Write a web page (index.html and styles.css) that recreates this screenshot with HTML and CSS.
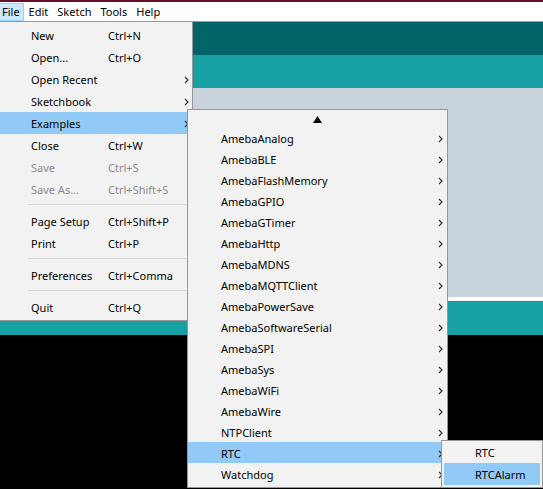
FILE: index.html
```html
<!DOCTYPE html>
<html>
<head>
<meta charset="utf-8">
<link rel="stylesheet" href="styles.css">
</head>
<body>
<div class="app">
  <div class="titlebar"></div>
  <div class="menubar">
    <span class="mb-item active">File</span>
    <span class="mb-item">Edit</span>
    <span class="mb-item">Sketch</span>
    <span class="mb-item">Tools</span>
    <span class="mb-item">Help</span>
  </div>
  <div class="toolbar"></div>
  <div class="tabs"></div>
  <div class="editor"></div>
  <div class="divider"></div>
  <div class="status"></div>
  <div class="console"></div>
</div>

<div class="menu file-menu">
  <div class="row"><span class="label">New</span><span class="key">Ctrl+N</span></div>
  <div class="row"><span class="label">Open...</span><span class="key">Ctrl+O</span></div>
  <div class="row"><span class="label">Open Recent</span><span class="key"></span><svg class="chev" width="5" height="8" viewBox="0 0 5 8"><path d="M1 1 L4 4 L1 7" fill="none" stroke="#333" stroke-width="1.2"/></svg></div>
  <div class="row"><span class="label">Sketchbook</span><span class="key"></span><svg class="chev" width="5" height="8" viewBox="0 0 5 8"><path d="M1 1 L4 4 L1 7" fill="none" stroke="#333" stroke-width="1.2"/></svg></div>
  <div class="row hl"><span class="label">Examples</span><span class="key"></span><svg class="chev" width="5" height="8" viewBox="0 0 5 8"><path d="M1 1 L4 4 L1 7" fill="none" stroke="#333" stroke-width="1.2"/></svg></div>
  <div class="row"><span class="label">Close</span><span class="key">Ctrl+W</span></div>
  <div class="row dis"><span class="label">Save</span><span class="key">Ctrl+S</span></div>
  <div class="row dis"><span class="label">Save As...</span><span class="key">Ctrl+Shift+S</span></div>
  <div class="sep"></div>
  <div class="row"><span class="label">Page Setup</span><span class="key">Ctrl+Shift+P</span></div>
  <div class="row"><span class="label">Print</span><span class="key">Ctrl+P</span></div>
  <div class="sep"></div>
  <div class="row"><span class="label">Preferences</span><span class="key">Ctrl+Comma</span></div>
  <div class="sep"></div>
  <div class="row"><span class="label">Quit</span><span class="key">Ctrl+Q</span></div>
</div>

<div class="menu examples-menu">
  <div class="scroll-up"><svg width="9" height="7" viewBox="0 0 9 7"><polygon points="4.5,0 9,7 0,7" fill="#000"/></svg></div>
  <div class="srow"><span class="slabel">AmebaAnalog</span><svg class="chev" width="5" height="8" viewBox="0 0 5 8"><path d="M1 1 L4 4 L1 7" fill="none" stroke="#333" stroke-width="1.2"/></svg></div>
  <div class="srow"><span class="slabel">AmebaBLE</span><svg class="chev" width="5" height="8" viewBox="0 0 5 8"><path d="M1 1 L4 4 L1 7" fill="none" stroke="#333" stroke-width="1.2"/></svg></div>
  <div class="srow"><span class="slabel">AmebaFlashMemory</span><svg class="chev" width="5" height="8" viewBox="0 0 5 8"><path d="M1 1 L4 4 L1 7" fill="none" stroke="#333" stroke-width="1.2"/></svg></div>
  <div class="srow"><span class="slabel">AmebaGPIO</span><svg class="chev" width="5" height="8" viewBox="0 0 5 8"><path d="M1 1 L4 4 L1 7" fill="none" stroke="#333" stroke-width="1.2"/></svg></div>
  <div class="srow"><span class="slabel">AmebaGTimer</span><svg class="chev" width="5" height="8" viewBox="0 0 5 8"><path d="M1 1 L4 4 L1 7" fill="none" stroke="#333" stroke-width="1.2"/></svg></div>
  <div class="srow"><span class="slabel">AmebaHttp</span><svg class="chev" width="5" height="8" viewBox="0 0 5 8"><path d="M1 1 L4 4 L1 7" fill="none" stroke="#333" stroke-width="1.2"/></svg></div>
  <div class="srow"><span class="slabel">AmebaMDNS</span><svg class="chev" width="5" height="8" viewBox="0 0 5 8"><path d="M1 1 L4 4 L1 7" fill="none" stroke="#333" stroke-width="1.2"/></svg></div>
  <div class="srow"><span class="slabel">AmebaMQTTClient</span><svg class="chev" width="5" height="8" viewBox="0 0 5 8"><path d="M1 1 L4 4 L1 7" fill="none" stroke="#333" stroke-width="1.2"/></svg></div>
  <div class="srow"><span class="slabel">AmebaPowerSave</span><svg class="chev" width="5" height="8" viewBox="0 0 5 8"><path d="M1 1 L4 4 L1 7" fill="none" stroke="#333" stroke-width="1.2"/></svg></div>
  <div class="srow"><span class="slabel">AmebaSoftwareSerial</span><svg class="chev" width="5" height="8" viewBox="0 0 5 8"><path d="M1 1 L4 4 L1 7" fill="none" stroke="#333" stroke-width="1.2"/></svg></div>
  <div class="srow"><span class="slabel">AmebaSPI</span><svg class="chev" width="5" height="8" viewBox="0 0 5 8"><path d="M1 1 L4 4 L1 7" fill="none" stroke="#333" stroke-width="1.2"/></svg></div>
  <div class="srow"><span class="slabel">AmebaSys</span><svg class="chev" width="5" height="8" viewBox="0 0 5 8"><path d="M1 1 L4 4 L1 7" fill="none" stroke="#333" stroke-width="1.2"/></svg></div>
  <div class="srow"><span class="slabel">AmebaWiFi</span><svg class="chev" width="5" height="8" viewBox="0 0 5 8"><path d="M1 1 L4 4 L1 7" fill="none" stroke="#333" stroke-width="1.2"/></svg></div>
  <div class="srow"><span class="slabel">AmebaWire</span><svg class="chev" width="5" height="8" viewBox="0 0 5 8"><path d="M1 1 L4 4 L1 7" fill="none" stroke="#333" stroke-width="1.2"/></svg></div>
  <div class="srow"><span class="slabel">NTPClient</span><svg class="chev" width="5" height="8" viewBox="0 0 5 8"><path d="M1 1 L4 4 L1 7" fill="none" stroke="#333" stroke-width="1.2"/></svg></div>
  <div class="srow hl"><span class="slabel">RTC</span><svg class="chev" width="5" height="8" viewBox="0 0 5 8"><path d="M1 1 L4 4 L1 7" fill="none" stroke="#333" stroke-width="1.2"/></svg></div>
  <div class="srow"><span class="slabel">Watchdog</span><svg class="chev" width="5" height="8" viewBox="0 0 5 8"><path d="M1 1 L4 4 L1 7" fill="none" stroke="#333" stroke-width="1.2"/></svg></div>
</div>

<div class="menu rtc-menu">
  <div class="rrow">RTC</div>
  <div class="rrow hl">RTCAlarm</div>
</div>
</body>
</html>
```

FILE: styles.css
```css
html, body {
  margin: 0;
  padding: 0;
  width: 543px;
  height: 489px;
  overflow: hidden;
  font-family: "Noto Sans", "Open Sans", sans-serif;
  font-size: 11px;
  color: #000;
}

.app {
  display: flex;
  flex-direction: column;
  height: 489px;
}

.titlebar { height: 2px; background: #64102a; }

.menubar {
  height: 19px;
  background: #fff;
  border-bottom: 1px solid #a0a0a0;
  display: flex;
  gap: 1px;
  padding-left: 0;
  margin-left: -2px;
}

.mb-item {
  margin-top: 1px;
  height: 16px;
  line-height: 16px;
  padding: 0 3px;
  border: 1px solid transparent;
}

.mb-item.active {
  background: #cce8ff;
  border-color: #99d1ff;
}

.toolbar { height: 33px; background: #006468; }
.tabs { height: 33px; background: #17a1a5; }
.editor { height: 209px; background: #c9d3dc; }
.divider { height: 4px; background: #ffffff; border-bottom: 1px solid #6a6a6a; }
.status { height: 33px; background: #17a1a5; }
.console { flex: 1; background: #000; }

.menu {
  position: absolute;
  background: #f2f2f2;
  border: 1px solid #979797;
  box-sizing: border-box;
}

.file-menu {
  left: -1px;
  top: 21px;
  width: 194px;
  padding: 2px 0;
}

.row {
  display: flex;
  align-items: center;
  height: 22px;
  line-height: 21px;
  padding-top: 1px;
  box-sizing: border-box;
  padding-left: 31px;
  white-space: nowrap;
}

.row .label { flex: 0 0 77px; }
.row .key { flex: 1; }
.row .chev { margin-right: 3px; }

.row.dis { color: #8a8a8a; }
.hl { background: #91c9f7; }

.sep {
  height: 1px;
  margin: 4px 0 5px 28px;
  background: #d7d7d7;
}

.examples-menu {
  left: 187px;
  top: 109px;
  width: 261px;
  padding-bottom: 3px;
}

.scroll-up {
  height: 17px;
  display: flex;
  justify-content: center;
  padding-top: 6px;
  box-sizing: border-box;
}

.scroll-up svg { display: block; }

.srow {
  display: flex;
  align-items: center;
  height: 21px;
  line-height: 19px;
  padding-top: 2px;
  box-sizing: border-box;
  padding-left: 33px;
  white-space: nowrap;
}

.srow .slabel { flex: 1; }
.srow .chev { margin-right: 4px; }

.rtc-menu {
  left: 441px;
  top: 440px;
  width: 102px;
  padding: 0 2px 2px 2px;
}

.rrow {
  height: 22px;
  line-height: 21px;
  padding-top: 1px;
  box-sizing: border-box;
  padding-left: 31px;
}
```
